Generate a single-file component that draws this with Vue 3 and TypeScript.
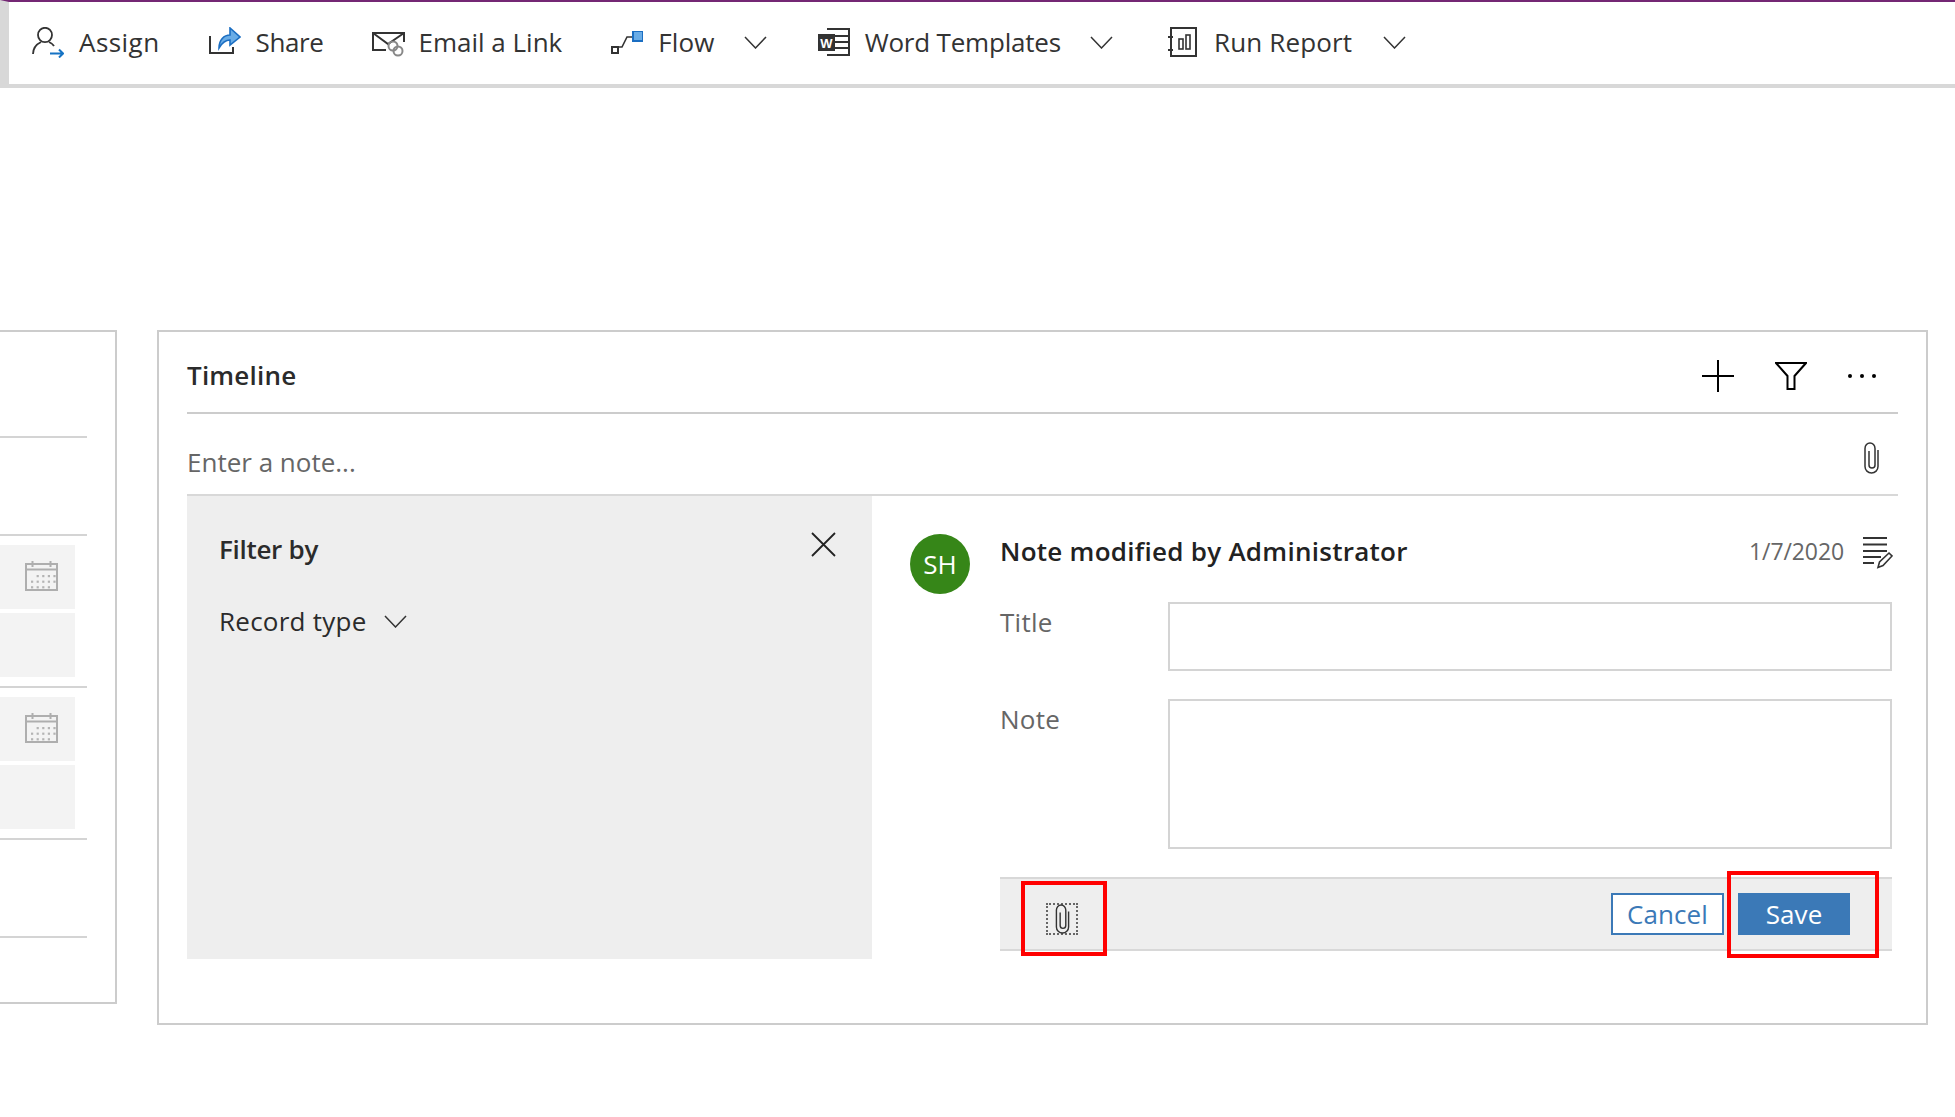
<script setup lang="ts">
const sideRows = [
  { gap: 104, kind: 'line' },
  { gap: 96, kind: 'line' },
  { gap: 9, kind: 'event' },
  { gap: 4, kind: 'block' },
  { gap: 9, kind: 'line' },
  { gap: 9, kind: 'event' },
  { gap: 4, kind: 'block' },
  { gap: 9, kind: 'line' },
  { gap: 96, kind: 'line' }
]

const dots: [number, number][] = []
for (let r = 0; r < 3; r++) {
  for (let c = 0; c < 5; c++) {
    if (r === 0 && c === 0) continue
    if (r === 2 && c === 4) continue
    dots.push([6 + c * 5.6, 14 + r * 5.6])
  }
}
</script>

<template>
  <div class="page">
    <header class="toolbar">
      <div class="tool tool-assign">
        <svg width="32" height="31" viewBox="0 0 32 31" fill="none">
          <ellipse cx="13" cy="8" rx="7" ry="7.2" stroke="#333" stroke-width="1.8" />
          <path d="M1 27C1 20 5 17 9 15M17 15C19 16 21 17 22 19" stroke="#333" stroke-width="1.8" />
          <path d="M18 26.5H31M27 22.5L31 26.5L27 30.5" stroke="#1673c4" stroke-width="2" />
        </svg>
        <span class="label">Assign</span>
      </div>
      <div class="tool tool-share">
        <svg width="32" height="27" viewBox="0 0 32 27" fill="none">
          <path d="M1 9V26H24V20" stroke="#333" stroke-width="2" />
          <path d="M10 21C10 13 15 8 21 8V1L31 10L21 18V13C16 13 13 16 10 21Z" fill="#69ace6" stroke="#1b6ec2" stroke-width="1.6" />
        </svg>
        <span class="label">Share</span>
      </div>
      <div class="tool tool-email">
        <svg width="33" height="25" viewBox="0 0 33 25" fill="none">
          <path d="M14 18H1V1H32V10M1 1L16 12L32 1" stroke="#333" stroke-width="2" />
          <circle cx="21" cy="14" r="4.5" stroke="#888" stroke-width="2" />
          <circle cx="26" cy="19" r="4.5" stroke="#888" stroke-width="2" />
        </svg>
        <span class="label">Email a Link</span>
      </div>
      <div class="tool">
        <svg width="32" height="23" viewBox="0 0 32 23" fill="none">
          <rect x="1" y="16" width="6" height="6" fill="#fff" stroke="#333" stroke-width="2" />
          <path d="M8 16H11L16 6H22" stroke="#333" stroke-width="1.6" />
          <rect x="22" y="0" width="10" height="10" fill="#69ace6" stroke="#1b6ec2" stroke-width="2" />
        </svg>
        <span class="label">Flow</span>
        <svg class="chev" width="23" height="13" viewBox="0 0 23 13" fill="none">
          <path d="M1 1L11.5 12L22 1" stroke="#333" stroke-width="1.5" />
        </svg>
      </div>
      <div class="tool tool-word">
        <svg width="32" height="28" viewBox="0 0 32 28" fill="none">
          <path d="M9 1H31V27H9M14 8H31M14 14H31M14 20H31" stroke="#333" stroke-width="2" />
          <rect x="0" y="6" width="17" height="17" fill="#333" />
          <text x="8.5" y="19.5" class="word-w">W</text>
        </svg>
        <span class="label">Word Templates</span>
        <svg class="chev" width="23" height="13" viewBox="0 0 23 13" fill="none">
          <path d="M1 1L11.5 12L22 1" stroke="#333" stroke-width="1.5" />
        </svg>
      </div>
      <div class="tool tool-run">
        <svg width="29" height="30" viewBox="0 0 29 30" fill="none">
          <rect x="3" y="1" width="25" height="28" stroke="#333" stroke-width="2" />
          <path d="M0 10H5M0 23H5" stroke="#333" stroke-width="2" />
          <rect x="11" y="12" width="4" height="10" stroke="#333" stroke-width="1.6" />
          <rect x="18" y="8" width="4" height="14" stroke="#333" stroke-width="1.6" />
        </svg>
        <span class="label">Run Report</span>
        <svg class="chev" width="23" height="13" viewBox="0 0 23 13" fill="none">
          <path d="M1 1L11.5 12L22 1" stroke="#333" stroke-width="1.5" />
        </svg>
      </div>
    </header>

    <main class="content">
      <aside class="side-card">
        <template v-for="(row, i) in sideRows" :key="i">
          <div v-if="row.kind === 'line'" class="side-line" :style="{ marginTop: row.gap + 'px' }"></div>
          <div v-else class="side-block" :style="{ marginTop: row.gap + 'px' }">
            <svg v-if="row.kind === 'event'" width="33" height="30" viewBox="0 0 33 30" fill="none">
              <rect x="1" y="3" width="31" height="26" stroke="#aeaeae" stroke-width="2" />
              <path d="M1 8.5H32" stroke="#aeaeae" stroke-width="2" />
              <path d="M7.5 0V6M25.5 0V6" stroke="#aeaeae" stroke-width="2" />
              <rect v-for="(d, n) in dots" :key="n" :x="d[0]" :y="d[1]" width="2.2" height="2.2" fill="#b4b4b4" />
            </svg>
          </div>
        </template>
      </aside>

      <section class="timeline">
        <div class="tl-head">
          <h2 class="tl-title">Timeline</h2>
          <div class="tl-actions">
            <svg width="32" height="32" viewBox="0 0 32 32">
              <path d="M0 16H32M16 0V32" stroke="#000" stroke-width="2" />
            </svg>
            <svg width="32" height="28" viewBox="0 0 32 28" fill="none">
              <path d="M1 1H31L19.5 14V27H12.5V14Z" stroke="#000" stroke-width="2" />
            </svg>
            <svg width="30" height="4" viewBox="0 0 30 4">
              <circle cx="2" cy="2" r="2" />
              <circle cx="14" cy="2" r="2" />
              <circle cx="26" cy="2" r="2" />
            </svg>
          </div>
        </div>

        <div class="tl-note">
          <span class="placeholder">Enter a note...</span>
          <svg class="clip-top" width="15" height="32" viewBox="0 0 15 32" fill="none">
            <path d="M14 8V24.5A6.5 6.5 0 0 1 1 24.5V6.5A5 5.5 0 0 1 11 6.5V23A3 3 0 0 1 5 23V9" stroke="#333" stroke-width="1.5" />
          </svg>
        </div>

        <div class="tl-body">
          <div class="filter">
            <div class="filter-head">
              <span class="filter-title">Filter by</span>
              <svg width="25" height="25" viewBox="0 0 25 25">
                <path d="M1 1L24 24M24 1L1 24" stroke="#222" stroke-width="1.8" />
              </svg>
            </div>
            <div class="filter-row">
              <span>Record type</span>
              <svg width="23" height="13" viewBox="0 0 23 13" fill="none">
                <path d="M1 1L11.5 12L22 1" stroke="#333" stroke-width="1.5" />
              </svg>
            </div>
          </div>

          <div class="entry">
            <div class="avatar">SH</div>
            <div class="entry-main">
              <div class="entry-head">
                <span class="entry-title">Note modified by Administrator</span>
                <span class="entry-date">1/7/2020</span>
                <svg class="entry-edit" width="31" height="33" viewBox="0 0 31 33" fill="none">
                  <path d="M1 2H25M1 8.5H25M1 15H25M1 21H19M1 27H12" stroke="#333" stroke-width="2" />
                  <path d="M16 31.5L17.5 26L27 17L30 20L21 29.5Z" fill="#fff" stroke="#333" stroke-width="1.6" />
                </svg>
              </div>
              <div class="field">
                <label class="field-label">Title</label>
                <div class="field-box"></div>
              </div>
              <div class="field field-note">
                <label class="field-label">Note</label>
                <div class="field-box"></div>
              </div>
              <div class="footer">
                <div class="attach">
                  <svg width="15" height="30" viewBox="0 0 15 32" fill="none">
                    <path d="M14 8V24.5A6.5 6.5 0 0 1 1 24.5V6.5A5 5.5 0 0 1 11 6.5V23A3 3 0 0 1 5 23V9" stroke="#333" stroke-width="1.5" />
                  </svg>
                </div>
                <button class="btn btn-cancel">Cancel</button>
                <button class="btn btn-save">Save</button>
                <div class="callout callout-attach"></div>
                <div class="callout callout-save"></div>
              </div>
            </div>
          </div>
        </div>
      </section>
    </main>
  </div>
</template>

<style>
html,
body {
  margin: 0;
  background: #fff;
}
</style>

<style scoped>
.page {
  width: 1955px;
  height: 1117px;
  overflow: hidden;
  background: #fff;
  font-family: "Open Sans", "Noto Sans", sans-serif;
  color: #333;
}

.toolbar {
  box-sizing: border-box;
  height: 88px;
  display: flex;
  align-items: center;
  gap: 49px;
  padding: 0 0 2px 23px;
  border-top: 2px solid #742774;
  border-bottom: 4px solid #d8d8d8;
  border-left: 9px solid #d8d8d8;
}

.tool {
  display: flex;
  align-items: center;
  gap: 15px;
}

.label {
  font-size: 26px;
  line-height: 36px;
  letter-spacing: 0.15px;
  white-space: nowrap;
}

.tool-assign .label {
  letter-spacing: 0.45px;
}

.tool-share svg {
  margin-top: -4px;
}

.tool-share .label {
  letter-spacing: -0.4px;
}

.tool-email {
  gap: 13px;
}

.tool-email svg {
  margin-top: 5px;
}

.tool-email .label {
  letter-spacing: 0;
}

.tool-word {
  margin-left: 2px;
}

.tool-word .label {
  letter-spacing: -0.2px;
}

.tool-run {
  margin-left: 6px;
  gap: 17px;
}

.chev {
  margin-left: 14px;
}

.word-w {
  font-family: "Liberation Sans", sans-serif;
  font-size: 13px;
  font-weight: 700;
  fill: #fff;
  text-anchor: middle;
}

.content {
  display: flex;
  align-items: flex-start;
  gap: 40px;
  margin-top: 242px;
}

.side-card {
  box-sizing: border-box;
  width: 117px;
  height: 674px;
  border: 2px solid #ccc;
  border-left: 0;
  display: flex;
  flex-direction: column;
}

.side-line {
  width: 87px;
  height: 2px;
  background: #d4d4d4;
}

.side-block {
  box-sizing: border-box;
  width: 75px;
  height: 64px;
  background: #f3f3f3;
  padding: 16px 0 0 25px;
}

.side-block svg {
  display: block;
}

.timeline {
  box-sizing: border-box;
  width: 1771px;
  height: 695px;
  border: 2px solid #ccc;
  padding: 0 28px;
}

.tl-head {
  box-sizing: border-box;
  height: 82px;
  display: flex;
  align-items: center;
  justify-content: space-between;
  padding-top: 6px;
  border-bottom: 2px solid #ccc;
}

.tl-title {
  margin: 0;
  font-size: 26px;
  font-weight: 600;
  letter-spacing: 0.2px;
  color: #2b2b2b;
}

.tl-actions {
  display: flex;
  align-items: center;
  gap: 41px;
  padding: 2px 20px 0 0;
}

.tl-note {
  box-sizing: border-box;
  height: 82px;
  display: flex;
  align-items: center;
  justify-content: space-between;
  padding: 16px 19px 0 0;
  border-bottom: 2px solid #d8d8d8;
}

.clip-top {
  margin-top: -8px;
}

.placeholder {
  font-size: 26px;
  color: #666;
}

.tl-body {
  display: flex;
}

.filter {
  box-sizing: border-box;
  width: 685px;
  height: 463px;
  background: #eee;
  padding: 36px 36px 0 32px;
}

.filter-head {
  display: flex;
  align-items: flex-start;
  justify-content: space-between;
}

.filter-title {
  font-size: 26px;
  font-weight: 600;
  line-height: 34px;
  letter-spacing: -0.3px;
  color: #2b2b2b;
}

.filter-row {
  display: flex;
  align-items: center;
  gap: 17px;
  margin-top: 37px;
  font-size: 26px;
  line-height: 36px;
  letter-spacing: 0.25px;
  color: #2b2b2b;
}

.entry {
  flex: 1;
  display: flex;
  gap: 30px;
  padding: 38px 0 0 38px;
}

.avatar {
  width: 60px;
  height: 60px;
  flex: none;
  border-radius: 50%;
  background: #368618;
  color: #fff;
  font-size: 26px;
  display: flex;
  align-items: center;
  justify-content: center;
}

.entry-main {
  flex: 1;
  padding-right: 6px;
}

.entry-head {
  height: 68px;
  display: flex;
  align-items: flex-start;
}

.entry-title {
  flex: 1;
  font-size: 26px;
  font-weight: 600;
  line-height: 34px;
  letter-spacing: 0.27px;
  color: #222;
}

.entry-date {
  font-size: 23px;
  line-height: 34px;
  letter-spacing: -0.1px;
  color: #666;
  margin-right: 18px;
}

.entry-edit {
  margin: 2px -1px 0 0;
}

.field {
  display: flex;
}

.field-note {
  margin-top: 28px;
}

.field-label {
  width: 168px;
  flex: none;
  font-size: 26px;
  line-height: 40px;
  letter-spacing: 0.25px;
  color: #666;
}

.field-box {
  box-sizing: border-box;
  flex: 1;
  height: 69px;
  border: 2px solid #d4d4d4;
  background: #fff;
}

.field-note .field-box {
  height: 150px;
}

.footer {
  position: relative;
  box-sizing: border-box;
  height: 74px;
  margin-top: 28px;
  display: flex;
  align-items: center;
  padding: 0 42px 0 46px;
  background: #eee;
  border-top: 2px solid #d8d8d8;
  border-bottom: 2px solid #d8d8d8;
}

.attach {
  box-sizing: border-box;
  width: 32px;
  height: 32px;
  margin: 10px auto 0 0;
  border: 2px dotted #666;
  display: flex;
  align-items: center;
  justify-content: center;
}

.btn {
  box-sizing: border-box;
  height: 42px;
  padding: 0;
  font-family: inherit;
  font-size: 26px;
  letter-spacing: 0.1px;
  border: 2px solid #3b79b7;
}

.btn-cancel {
  width: 113px;
  background: #fff;
  color: #3b79b7;
  margin-right: 14px;
}

.btn-save {
  width: 112px;
  background: #3b79b7;
  color: #fff;
}

.callout {
  position: absolute;
  box-sizing: border-box;
  border: 4px solid #f00;
}

.callout-attach {
  left: 21px;
  top: 2px;
  width: 86px;
  height: 75px;
}

.callout-save {
  left: 727px;
  top: -8px;
  width: 152px;
  height: 87px;
}
</style>
